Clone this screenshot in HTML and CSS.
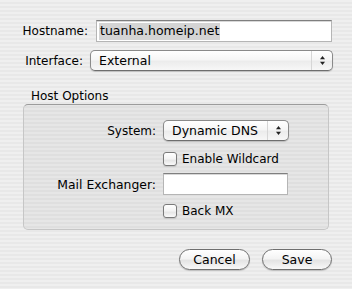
FILE: index.html
```html
<!DOCTYPE html>
<html>
<head>
<meta charset="utf-8">
<link rel="stylesheet" href="styles.css">
</head>
<body>
<div class="dialog">
  <div class="row row-host">
    <label class="lbl lbl-host">Hostname:</label>
    <div class="field field-host"><span class="sel">tuanha.homeip.net</span></div>
  </div>
  <div class="row row-iface">
    <label class="lbl lbl-iface">Interface:</label>
    <div class="popup popup-iface">
      <span class="popup-text">External</span>
      <span class="popup-arrows"><svg width="7" height="11" viewBox="0 0 7 11"><path d="M3.5 1L6 4.2H1Z" fill="#222"/><path d="M3.5 10L6 6.8H1Z" fill="#222"/></svg></span>
    </div>
  </div>
  <div class="group-title">Host Options</div>
  <div class="group">
    <div class="grow grow-system">
      <label class="glbl">System:</label>
      <div class="popup popup-system">
        <span class="popup-text">Dynamic DNS</span>
        <span class="popup-arrows"><svg width="7" height="11" viewBox="0 0 7 11"><path d="M3.5 1L6 4.2H1Z" fill="#222"/><path d="M3.5 10L6 6.8H1Z" fill="#222"/></svg></span>
      </div>
    </div>
    <div class="grow grow-wild">
      <span class="glbl"></span>
      <div class="check"><span class="box"></span><span class="check-text">Enable Wildcard</span></div>
    </div>
    <div class="grow grow-mail">
      <label class="glbl glbl-mail">Mail Exchanger:</label>
      <div class="field field-mail"></div>
    </div>
    <div class="grow grow-back">
      <span class="glbl"></span>
      <div class="check"><span class="box"></span><span class="check-text">Back MX</span></div>
    </div>
  </div>
  <div class="buttons">
    <div class="btn btn-cancel">Cancel</div>
    <div class="btn btn-save">Save</div>
  </div>
</div>
</body>
</html>
```
FILE: styles.css
```css
html, body {
  margin: 0;
  padding: 0;
}
body {
  width: 352px;
  height: 289px;
  overflow: hidden;
  font-family: "DejaVu Sans", "Liberation Sans", sans-serif;
  font-size: 12px;
  color: #000;
  background: repeating-linear-gradient(to bottom, #efefef 0, #efefef 2px, #e8e8e8 2px, #e8e8e8 4px);
}
.dialog {
  padding-top: 20px;
}
.row {
  display: flex;
  align-items: center;
}
.lbl {
  text-align: right;
  flex: none;
}
.lbl-host {
  width: 88px;
  margin-right: 8px;
}
.lbl-iface {
  width: 83px;
  margin-right: 7px;
}
.field {
  box-sizing: border-box;
  background: #fff;
  border: 1px solid #b5b5b5;
  border-top-color: #7f7f7f;
  box-shadow: inset 0 1px 0 #d8d8d8;
  display: flex;
  align-items: center;
}
.field-host {
  width: 236px;
  height: 22px;
  padding-left: 2px;
}
.sel {
  background: #d4d4d4;
  padding: 1px 1px 2px 1px;
  line-height: 14px;
  font-size: 12.5px;
}
.row-iface {
  margin-top: 8px;
}
.popup {
  box-sizing: border-box;
  height: 21px;
  border: 1px solid #8a8a8a;
  border-bottom-color: #6e6e6e;
  border-radius: 5px;
  background: linear-gradient(to bottom, #ffffff 0%, #f6f6f6 45%, #ececec 55%, #f7f7f7 100%);
  box-shadow: 0 1px 1px rgba(0,0,0,0.18);
  display: flex;
  align-items: center;
}
.popup-iface {
  width: 243px;
}
.popup-text {
  flex: 1;
  padding-left: 8px;
  font-size: 12.5px;
}
.popup-arrows {
  width: 21px;
  align-self: stretch;
  border-left: 1px solid #d6d6d6;
  display: flex;
  align-items: center;
  justify-content: center;
  box-sizing: border-box;
}
.popup-arrows svg {
  display: block;
}
.group-title {
  margin-top: 18px;
  margin-left: 31px;
  line-height: 15px;
  font-size: 12px;
}
.group {
  box-sizing: border-box;
  margin-left: 23px;
  width: 306px;
  height: 126px;
  border: 1px solid #c6c6c6;
  border-top-color: #9c9c9c;
  border-radius: 5px;
  background: rgba(0,0,0,0.035);
  padding-top: 15px;
  display: flex;
  flex-direction: column;
}
.grow {
  display: flex;
  align-items: center;
}
.glbl {
  width: 132px;
  margin-right: 7px;
  text-align: right;
  flex: none;
}
.glbl-mail {
  font-size: 12.4px;
}
.popup-system {
  width: 126px;
  height: 21px;
}
.grow-wild {
  margin-top: 11px;
  height: 14px;
}
.grow-mail {
  margin-top: 7px;
}
.field-mail {
  width: 125px;
  height: 22px;
}
.grow-back {
  margin-top: 9px;
  height: 14px;
}
.check {
  display: flex;
  align-items: center;
  font-size: 12px;
}
.box {
  box-sizing: border-box;
  width: 14px;
  height: 14px;
  border: 1px solid #7a7a7a;
  border-radius: 3px;
  background: linear-gradient(to bottom, #ffffff 0%, #f3f3f3 50%, #e6e6e6 60%, #fafafa 100%);
  box-shadow: 0 1px 1px rgba(0,0,0,0.12);
  margin-right: 5px;
}
.buttons {
  display: flex;
  justify-content: flex-end;
  padding-right: 20px;
  margin-top: 19px;
  gap: 12px;
}
.btn {
  box-sizing: border-box;
  height: 21px;
  border: 1px solid #6f6f6f;
  border-radius: 11px;
  background: linear-gradient(to bottom, #ffffff 0%, #f4f4f4 45%, #e4e4e4 55%, #f8f8f8 100%);
  box-shadow: 0 1px 1px rgba(0,0,0,0.18);
  display: flex;
  align-items: center;
  justify-content: center;
  font-size: 12.5px;
}
.btn-cancel {
  width: 71px;
}
.btn-save {
  width: 70px;
}
```
